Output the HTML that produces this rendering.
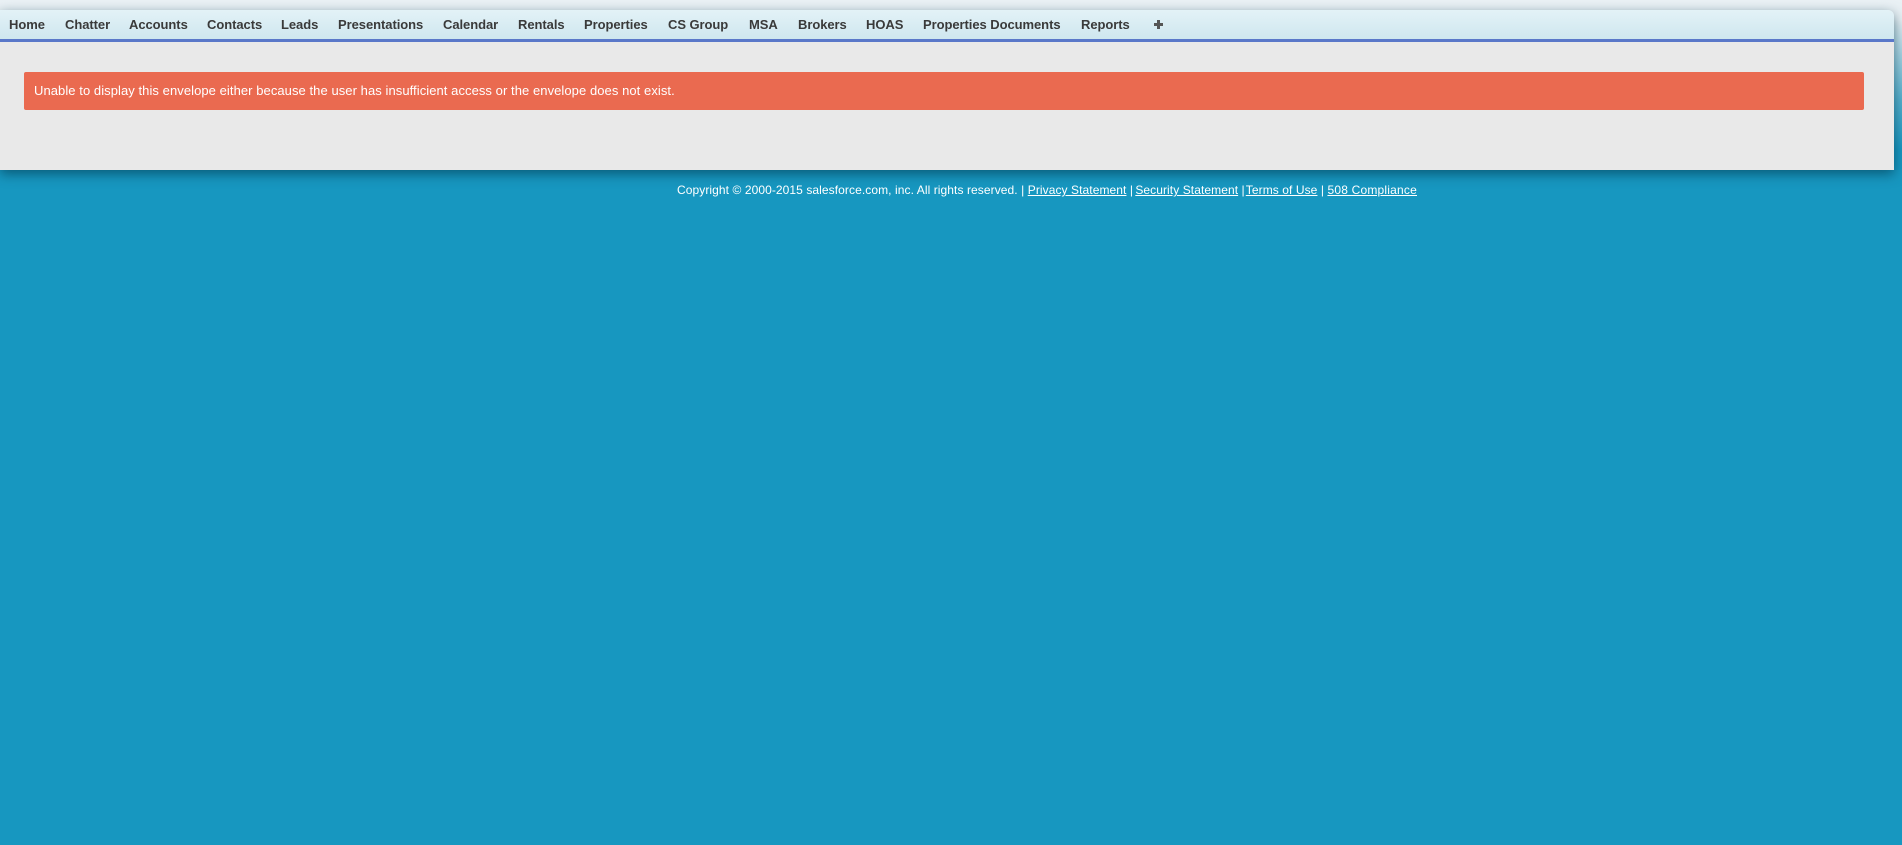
<!DOCTYPE html>
<html>
<head>
<meta charset="utf-8">
<title>Envelope</title>
<style>
html,body{margin:0;padding:0;width:1902px;height:845px;overflow:hidden;background:#1797c0;font-family:"Liberation Sans",Arial,sans-serif}
.bg{position:absolute;left:0;top:0;width:1902px;height:170px;background:linear-gradient(to bottom,#eaf1f5 0,#e6eff3 20px,#9ccfdf 60px,#55b0cd 100px,#1797c0 150px,#1797c0 170px)}
.panel{position:absolute;left:0;top:10px;width:1894px;height:160px;background:#e9e9e9;border-radius:0 6px 0 0;box-shadow:0 4px 12px rgba(0,50,70,.6)}
.tabs{position:absolute;left:0;top:0;width:1894px;height:29px;background:linear-gradient(to bottom,#e3f2f7,#cfe7ef);border-bottom:3px solid #5a78c9;border-radius:0 6px 0 0}
.tabs span{position:absolute;top:7px;font-size:13px;line-height:15px;font-weight:bold;color:#3a3a3a;white-space:nowrap;letter-spacing:-.06px}
.plus{position:absolute;left:1154px;top:10px}
.alert{position:absolute;left:24px;top:62px;width:1840px;height:38px;background:#ea6a50;border-radius:2px;color:#fff;font-size:13px;line-height:38px;text-indent:10px;white-space:nowrap;letter-spacing:.065px}
.footer{position:absolute;left:677px;top:183px;font-size:12px;line-height:14px;color:#fff;white-space:nowrap;letter-spacing:.08px}
.footer a{color:#fff;text-decoration:underline}
</style>
</head>
<body>
<div class="bg"></div>
<div class="panel">
  <div class="tabs">
    <span style="left:9px">Home</span>
    <span style="left:65px">Chatter</span>
    <span style="left:129px">Accounts</span>
    <span style="left:207px">Contacts</span>
    <span style="left:281px">Leads</span>
    <span style="left:338px">Presentations</span>
    <span style="left:443px">Calendar</span>
    <span style="left:518px">Rentals</span>
    <span style="left:584px">Properties</span>
    <span style="left:668px">CS Group</span>
    <span style="left:749px">MSA</span>
    <span style="left:798px">Brokers</span>
    <span style="left:866px">HOAS</span>
    <span style="left:923px">Properties Documents</span>
    <span style="left:1081px">Reports</span>
    <svg class="plus" width="9" height="9" viewBox="0 0 9 9"><path d="M3 0h3v3h3v3h-3v3h-3v-3h-3v-3h3z" fill="#555"/></svg>
  </div>
  <div class="alert">Unable to display this envelope either because the user has insufficient access or the envelope does not exist.</div>
</div>
<div class="footer">Copyright © 2000-2015 salesforce.com, inc. All rights reserved. | <a>Privacy Statement</a> | <a style="margin-left:-1.2px">Security Statement</a> | <a style="margin-left:-2.4px">Terms of Use</a> | <a style="letter-spacing:.2px">508 Compliance</a></div>
</body>
</html>
